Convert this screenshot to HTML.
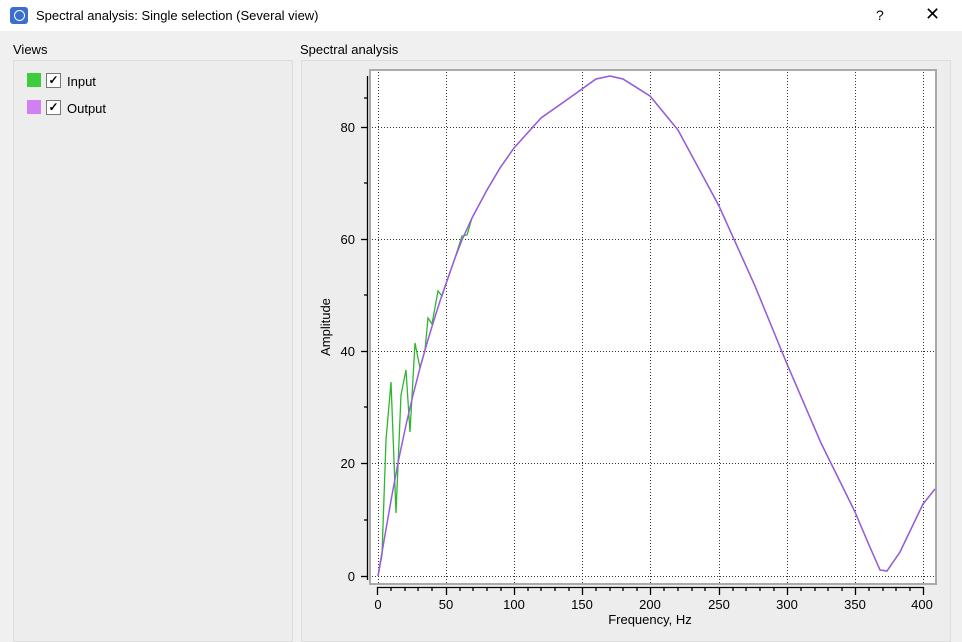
<!DOCTYPE html>
<html><head><style>
body{margin:0;width:962px;height:639px;background:#f0f0f0;font-family:"Liberation Sans",sans-serif;font-size:13px;color:#000;position:relative;overflow:hidden}
.t{position:absolute}
</style></head><body>
<div class="t" style="left:0;top:0;width:962px;height:31px;background:#fff"></div>
<div class="t" style="left:10px;top:7px;width:18px;height:17px;background:#3a6fd0;border-radius:3px"></div>
<div class="t" style="left:14px;top:10px;width:9px;height:9px;border:1.5px solid #fff;border-radius:50%"></div>
<div class="t" style="left:36px;top:8px;font-size:13px">Spectral analysis: Single selection (Several view)</div>
<div class="t" style="left:876px;top:7px;font-size:14px">?</div>
<div class="t" style="left:925px;top:4px;font-size:18px">✕</div>
<div class="t" style="left:13px;top:42px">Views</div>
<div class="t" style="left:300px;top:42px">Spectral analysis</div>
<div class="t" style="left:13px;top:60px;width:278px;height:580px;border:1px solid #ddd;background:#ededed"></div>
<div class="t" style="left:301px;top:60px;width:648px;height:580px;border:1px solid #ddd;background:#ededed"></div>
<div class="t" style="left:27px;top:73px;width:14px;height:14px;background:#3ccc3c"></div>
<div class="t" style="left:46px;top:73px;width:13px;height:13px;background:#fff;border:1px solid #777;font-size:12px;line-height:13px;text-align:center;font-weight:bold">✓</div>
<div class="t" style="left:67px;top:74px">Input</div>
<div class="t" style="left:27px;top:100px;width:14px;height:14px;background:#d080f0"></div>
<div class="t" style="left:46px;top:100px;width:13px;height:13px;background:#fff;border:1px solid #777;font-size:12px;line-height:13px;text-align:center;font-weight:bold">✓</div>
<div class="t" style="left:67px;top:101px">Output</div>
<svg class="t" style="left:0;top:0" width="962" height="639">
<rect x="370" y="70" width="566" height="514" fill="#fff" stroke="#aaa" stroke-width="2"/>
<g stroke="#333" stroke-dasharray="1,2" stroke-width="1">
<line x1="446.5" y1="72" x2="446.5" y2="583"/><line x1="514.5" y1="72" x2="514.5" y2="583"/><line x1="582.5" y1="72" x2="582.5" y2="583"/><line x1="650.5" y1="72" x2="650.5" y2="583"/><line x1="719.5" y1="72" x2="719.5" y2="583"/><line x1="787.5" y1="72" x2="787.5" y2="583"/><line x1="855.5" y1="72" x2="855.5" y2="583"/><line x1="923.5" y1="72" x2="923.5" y2="583"/><line x1="378.5" y1="72" x2="378.5" y2="583"/>
<line x1="372" y1="127.5" x2="935" y2="127.5"/><line x1="372" y1="239.5" x2="935" y2="239.5"/><line x1="372" y1="351.5" x2="935" y2="351.5"/><line x1="372" y1="463.5" x2="935" y2="463.5"/><line x1="372" y1="576.5" x2="935" y2="576.5"/>
</g>
<g stroke="#000" stroke-width="1.3" fill="none">
<line x1="367.5" y1="76" x2="367.5" y2="580"/>
<line x1="361" y1="576.5" x2="368" y2="576.5"/><line x1="361" y1="463.5" x2="368" y2="463.5"/><line x1="361" y1="351.5" x2="368" y2="351.5"/><line x1="361" y1="239.5" x2="368" y2="239.5"/><line x1="361" y1="127.5" x2="368" y2="127.5"/>
<line x1="364" y1="520" x2="368" y2="520"/><line x1="364" y1="407" x2="368" y2="407"/><line x1="364" y1="295" x2="368" y2="295"/><line x1="364" y1="183" x2="368" y2="183"/><line x1="364" y1="98" x2="368" y2="98"/>
<line x1="377" y1="587.5" x2="924" y2="587.5"/>
<path d="M377.5 587v8M446.5 587v8M514.5 587v8M582.5 587v8M650.5 587v8M719.5 587v8M787.5 587v8M855.5 587v8M923.5 587v8"/>
<path d="M391 587v4M405 587v4M418 587v4M432 587v4M460 587v4M473 587v4M487 587v4M501 587v4M528 587v4M541 587v4M555 587v4M569 587v4M596 587v4M610 587v4M623 587v4M637 587v4M664 587v4M678 587v4M692 587v4M705 587v4M733 587v4M746 587v4M760 587v4M774 587v4M801 587v4M815 587v4M828 587v4M842 587v4M869 587v4M883 587v4M896 587v4M910 587v4"/>
</g>
<g font-size="13" fill="#000" text-anchor="end">
<text x="355" y="581">0</text><text x="355" y="468">20</text><text x="355" y="356">40</text><text x="355" y="244">60</text><text x="355" y="132">80</text>
</g>
<g font-size="13" fill="#000" text-anchor="middle">
<text x="378" y="609">0</text><text x="446" y="609">50</text><text x="514" y="609">100</text><text x="582" y="609">150</text><text x="650" y="609">200</text><text x="719" y="609">250</text><text x="787" y="609">300</text><text x="855" y="609">350</text><text x="922" y="609">400</text>
<text x="650" y="624">Frequency, Hz</text>
</g>
<text x="330" y="327" font-size="13" text-anchor="middle" transform="rotate(-90 330 327)">Amplitude</text>
<polyline fill="none" stroke="#2cb82c" stroke-width="1.3" points="378,576 382,555 386,440 391,382 396,513 401,395 406,370 410,432 415,343 420,368 425,350 428,318 432,324 438,291 442,296 448,278 455,258 462,236 467,235 472,218 487,190 500,168 514,148 541,118 568,99 596,79 610,76 623,79 650,96 678,130 719,206 755,286 787,364 821,443 855,512 869,545 880,570 887,571 900,552 923,504 935,489"/>
<polyline fill="none" stroke="#9a5ae0" stroke-width="1.5" points="378,576 385,535 392,495 399,458 406,425 413,395 420,368 427,343 434,320 441,298 448,278 455,258 462,240 472,218 487,190 500,168 514,148 541,118 568,99 596,79 610,76 623,79 650,96 678,130 719,206 755,286 787,364 821,443 855,512 869,545 880,570 887,571 900,552 923,504 935,489"/>
</svg>
</body></html>
